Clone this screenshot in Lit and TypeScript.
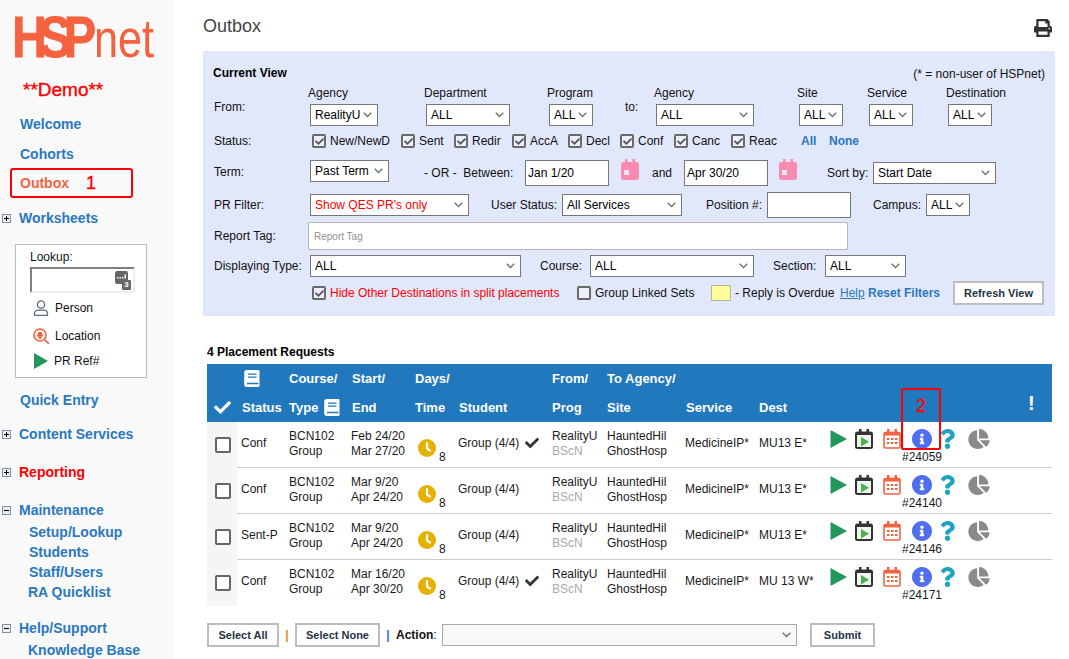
import { LitElement, html, css } from "lit";
import { customElement } from "lit/decorators.js";

const CHECK = "M173.898 439.404l-166.4-166.4c-9.997-9.997-9.997-26.206 0-36.204l36.203-36.204c9.997-9.998 26.207-9.998 36.204 0L192 312.69 432.095 72.596c9.997-9.997 26.207-9.997 36.204 0l36.203 36.204c9.997 9.997 9.997 26.206 0 36.204l-294.4 294.401c-9.998 9.997-26.207 9.997-36.204-.001z";
const INFO = "M256 8C119.043 8 8 119.083 8 256c0 136.997 111.043 248 248 248s248-111.003 248-248C504 119.083 392.957 8 256 8zm0 110c23.196 0 42 18.804 42 42s-18.804 42-42 42-42-18.804-42-42 18.804-42 42-42zm56 254c0 6.627-5.373 12-12 12h-88c-6.627 0-12-5.373-12-12v-24c0-6.627 5.373-12 12-12h12v-64h-12c-6.627 0-12-5.373-12-12v-24c0-6.627 5.373-12 12-12h64c6.627 0 12 5.373 12 12v100h12c6.627 0 12 5.373 12 12v24z";
const QUESTION = "M202.021 0C122.202 0 70.503 32.703 29.914 91.026c-7.363 10.58-5.093 25.086 5.178 32.874l43.138 32.709c10.373 7.865 25.132 6.026 33.253-4.148 25.049-31.381 43.63-49.449 82.757-49.449 30.764 0 68.816 19.799 68.816 49.631 0 22.552-18.617 34.134-48.993 51.164-35.423 19.86-82.299 44.576-82.299 106.405V320c0 13.255 10.745 24 24 24h72.471c13.255 0 24-10.745 24-24v-5.773c0-42.86 125.268-44.645 125.268-160.627C377.504 66.256 286.902 0 202.021 0zM192 373.459c-38.196 0-69.271 31.075-69.271 69.271 0 38.195 31.075 69.27 69.271 69.27s69.271-31.075 69.271-69.271-31.075-69.27-69.271-69.27z";
const PIE = "M527.79 288H290.5l158.03 158.03c6.04 6.04 15.98 6.53 22.19.68 38.7-36.46 65.32-85.61 73.13-140.86 1.34-9.46-6.51-17.85-16.06-17.85zm-15.83-64.8C503.72 103.74 408.26 8.28 288.8.04 279.68-.59 272 7.1 272 16.24V240h223.77c9.14 0 16.82-7.68 16.19-16.8zM224 288V50.71c0-9.55-8.39-17.4-17.84-16.06C86.99 51.49-4.1 155.6.14 280.37 4.5 408.51 114.83 513.59 243.03 511.98c50.4-.63 96.97-16.87 135.26-44.03 7.9-5.6 8.42-17.23 1.57-24.08L224 288z";
const PRINT = "M448 192V77.25c0-8.49-3.37-16.62-9.37-22.63L393.37 9.37c-6-6-14.14-9.37-22.63-9.37H96C78.33 0 64 14.33 64 32v160c-35.35 0-64 28.65-64 64v112c0 8.84 7.16 16 16 16h48v96c0 17.67 14.33 32 32 32h320c17.67 0 32-14.33 32-32v-96h48c8.84 0 16-7.16 16-16V256c0-35.35-28.65-64-64-64zm-64 256H128v-96h256v96zm0-224H128V64h192v48c0 8.84 7.16 16 16 16h48v96zm48 72c-13.25 0-24-10.75-24-24 0-13.26 10.75-24 24-24s24 10.74 24 24c0 13.25-10.75 24-24 24z";

const checkIcon = (cls: string) => html`<svg class=${cls} viewBox="0 0 512 512"><path d=${CHECK}></path></svg>`;
const book = html`<svg class="book" viewBox="0 0 16 17"><path fill="#fff" d="M3 0h11.500a1 1 0 0 1 1 1v15a1 1 0 0 1-1 1H3a2.800 2.800 0 0 1-2.800-2.800V2.800A2.800 2.800 0 0 1 3 0z"></path><path fill="#2278bd" d="M4 3.500h8.500v1.300H4zM4 6.500h8.500v1.300H4zM3 12.800h11.500v1.500H3z"></path></svg>`;
const cal = html`<svg class="cal" viewBox="0 0 18 21"><path fill="#f78bb0" d="M4 0h2.500v3h5V0H14v3h1.500A2.500 2.500 0 0 1 18 5.500v13a2.500 2.500 0 0 1-2.500 2.500h-13A2.500 2.500 0 0 1 0 18.500v-13A2.500 2.500 0 0 1 2.500 3H4z"></path><rect x="3" y="11" width="5" height="5" fill="#fde3ec"></rect></svg>`;
const playIcon = html`<svg class="i-play" viewBox="0 0 17 20"><polygon points="0.500,1 17,10 0.500,19" fill="#21985a"></polygon></svg>`;
const calPlay = html`<svg class="i-cal" viewBox="0 0 18 20"><path fill="#eef5ee" stroke="#333" stroke-width="2" d="M2.500 3.500h13a1.500 1.500 0 0 1 1.500 1.500v12.500a1.500 1.500 0 0 1-1.500 1.500h-13A1.500 1.500 0 0 1 1 17.500V5a1.500 1.500 0 0 1 1.500-1.500z"></path><path fill="#333" d="M1 3h16v3H1zM4 0h2.500v4H4zM11.500 0H14v4h-2.500z"></path><polygon points="6,8 14,12.750 6,17.500" fill="#4caf50"></polygon></svg>`;
const calGrid = html`<svg class="i-cal" viewBox="0 0 18 20"><path fill="none" stroke="#f4623f" stroke-width="1.600" d="M2.500 3.500h13a1.500 1.500 0 0 1 1.500 1.500v12.500a1.500 1.500 0 0 1-1.500 1.500h-13A1.500 1.500 0 0 1 1 17.500V5a1.500 1.500 0 0 1 1.500-1.500z"></path><path fill="#f4623f" d="M1 3h16v3.500H1zM4 0h2.500v4H4zM11.500 0H14v4h-2.500zM4 9h2.500v2H4zM8 9h2.500v2H8zM12 9h2.500v2H12zM4 13h2.500v2H4zM8 13h2.500v2H8zM12 13h2.500v2H12z"></path></svg>`;
const infoIcon = html`<svg class="i-info" viewBox="8 8 496 496"><path fill="#4f6ef0" d=${INFO}></path></svg>`;
const qIcon = html`<svg class="i-q" viewBox="0 0 384 512"><path fill="#1ea5bd" d=${QUESTION}></path></svg>`;
const pieIcon = html`<svg class="i-pie" viewBox="0 0 544 512"><path fill="#8a8a8a" d=${PIE}></path></svg>`;
const clock = html`<svg class="clock" viewBox="0 0 18 18"><circle cx="9" cy="9" r="9" fill="#e5b000"></circle><path d="M9 4v5.500l3 2.200" fill="none" stroke="#fff" stroke-width="2.200" stroke-linecap="round" stroke-linejoin="round"></path></svg>`;

@customElement("app-root")
export class AppRoot extends LitElement {
  static styles = css`
    :host { display: flex; width: 1069px; height: 659px; overflow: hidden; background: #fff; color: #111; font: 12px/14px "Liberation Sans", Arial, sans-serif; }
    * { box-sizing: border-box; }
    svg { display: block; }

    .side { width: 173px; height: 659px; flex: none; background: #f9f9f9; }
    .logo { width: 173px; height: 76px; }
    .demo { height: 24px; line-height: 24px; margin-top: 2px; padding-left: 23px; font-size: 19px; color: #f00; -webkit-text-stroke: .35px #f00; }
    .nav { display: flex; align-items: center; height: 20px; padding-left: 20px; font-size: 14px; font-weight: bold; color: #2a78bd; white-space: nowrap; }
    .nav.tree { padding-left: 2px; }
    .nav.sub { padding-left: 29px; }
    .nav.sub2 { padding-left: 28px; }
    .nav.red { color: #f00; }
    .tbox { width: 9px; height: 9px; margin-right: 8px; border: 1px solid #7f93a8; background: #e8edf2; position: relative; flex: none; }
    .tbox::before { content: ""; position: absolute; left: 1px; top: 3px; width: 5px; height: 1px; background: #000; }
    .tbox.plus::after { content: ""; position: absolute; left: 3px; top: 1px; width: 1px; height: 5px; background: #000; }
    .mt2 { margin-top: 2px; } .mt10 { margin-top: 10px; } .mt12 { margin-top: 12px; }
    .mt14 { margin-top: 14px; } .mt16 { margin-top: 16px; } .mt18 { margin-top: 18px; }
    .outbox { display: flex; align-items: center; width: 123px; height: 30px; margin: 4px 0 0 10px; padding-left: 8px; border: 2px solid #f00; border-radius: 3px; font-size: 14px; font-weight: bold; color: #f4623f; }
    .outbox b { margin-left: 17px; font-size: 18px; font-weight: normal; color: #f00; -webkit-text-stroke: .35px #f00; }

    .lookup { width: 132px; height: 134px; margin: 16px 0 0 15px; padding: 5px 0 0 14px; background: #fff; border: 1px solid #bdbdbd; color: #111; }
    .lk-title { height: 14px; }
    .lk-input { display: flex; justify-content: flex-end; align-items: center; width: 105px; height: 26px; margin-top: 3px; padding-right: 2px; border: 2px solid; border-color: #808080 #eee #eee #808080; }
    .lk-chip { position: relative; width: 16px; height: 19px; }
    .lk-chip svg { position: absolute; left: 0; top: 0; width: 13px; height: 13px; }
    .lk-chip span { position: absolute; right: 0; bottom: 0; width: 9px; height: 10px; border-radius: 1px; background: #666; color: #fff; font: bold 8px/10px "Liberation Sans", sans-serif; text-align: center; }
    .lk-row { display: flex; align-items: center; height: 28px; }
    .lk-row svg { width: 16px; height: 16px; margin: 0 6px 0 3px; flex: none; }
    .lk-row.first { margin-top: 1px; }
    .lk-row.last { height: 22px; }
    .lk-row.last svg { margin: 0 5px 0 3px; }

    .main { flex: 1; min-width: 0; padding-left: 30px; }
    .top { display: flex; justify-content: space-between; height: 51px; padding: 15px 17px 0 0; }
    .top h1 { margin: 0; font-size: 18px; line-height: 22px; font-weight: normal; color: #444; }
    .print { width: 18px; height: 18px; margin-top: 4px; fill: #333; }

    .panel { width: 852px; height: 265px; padding: 14px 10px 0 11px; background: #e2e8fb; }
    .p-title { display: flex; justify-content: space-between; height: 16px; line-height: 16px; }
    .p-title b { color: #000; margin-left: -1px; }
    .p-title span { padding-top: 1px; }
    .r { display: grid; align-items: center; white-space: nowrap; }
    .r1 { height: 44px; margin-top: 2px; grid-template-columns: 94px 116px 123px 78px 29px 143px 70px 79px 1fr; }
    .r2 { height: 28px; grid-template-columns: 98px 89px 53px 58px 56px 52px 54px 57px 70px 28px 1fr; }
    .r3 { height: 28px; margin-top: 4px; grid-template-columns: 96px 114px 101px 96px 31px 32px 95px 48px 46px 1fr; }
    .r4 { height: 30px; margin-top: 3px; grid-template-columns: 96px 181px 71px 144px 61px 106px 53px 1fr; }
    .r5 { height: 32px; grid-template-columns: 94px 1fr; }
    .r6 { height: 28px; grid-template-columns: 96px 230px 50px 183px 52px 1fr; }
    .r7 { height: 26px; grid-template-columns: 98px 265px 134px 24px 105px 28px 85px 1fr; }
    .field { display: flex; flex-direction: column; align-items: flex-start; align-self: start; gap: 4px; padding-top: 3px; }
    .field select { margin-left: 2px; }
    .dn { margin-top: 3px; }
    .up { margin-top: -3px; }
    .termsel { margin-top: -4px; }

    select { appearance: none; -webkit-appearance: none; display: block; height: 22px; padding: 0 0 0 4px; border: 1px solid #767676; border-radius: 0; color: #000; font: 12px "Liberation Sans", Arial, sans-serif;
      background: #fff url("data:image/svg+xml,%3Csvg xmlns='http://www.w3.org/2000/svg' width='9' height='6'%3E%3Cpath d='M.7.7 4.500 4.500 8.300.7' fill='none' stroke='%23707070' stroke-width='1.300'/%3E%3C/svg%3E") no-repeat right 5px center; }
    .w44 { width: 44px; } .w68 { width: 68px; } .w79 { width: 79px; } .w81 { width: 81px; } .w84 { width: 84px; } .w98 { width: 98px; }
    .w120 { width: 120px; } .w123 { width: 123px; } .w159 { width: 159px; } .w164 { width: 164px; } .w211 { width: 211px; }
    .redtxt { color: #f00; }
    input.txt { display: block; width: 84px; height: 26px; padding: 0 2px; border: 1px solid #767676; background: #fff; color: #000; font: 12px "Liberation Sans", Arial, sans-serif; }
    input.tag { display: block; width: 540px; height: 28px; padding: 0 5px; border: 1px solid #b5b5b5; border-radius: 1px; background: #fff; font: 10px "Liberation Sans", Arial, sans-serif; }
    input.tag::placeholder { color: #8f8f8f; opacity: 1; }
    .cal { width: 18px; height: 21px; margin-top: -7px; }

    .chk { display: flex; align-items: center; gap: 4px; }
    .cb { display: flex; align-items: center; justify-content: center; width: 14px; height: 14px; flex: none; border: 2px solid #6a6a6a; border-radius: 2px; background: #edf0fa; }
    .cb svg { width: 9px; height: 9px; fill: #555; }
    .link { color: #2a78bd; font-weight: bold; }
    .help { color: #2a78bd; text-decoration: underline; }
    .swatch { width: 20px; height: 16px; background: #ffff99; border: 1px solid #b5b5a0; }
    .btn { display: flex; align-items: center; justify-content: center; height: 24px; padding: 0; border: 2px solid #bdbdbd; background: #fff; color: #243444; font: bold 11px "Liberation Sans", Arial, sans-serif; }
    .refresh { width: 91px; }

    .count { height: 16px; margin-top: 28px; padding-left: 4px; line-height: 16px; font-weight: bold; color: #000; }
    .table { position: relative; width: 845px; margin: 4px 0 0 4px; }
    .thead, .row { display: grid; grid-template-columns: 30px 48px 62px 64px 43px 94px 55px 78px 74px 70px 1fr; }
    .thead { grid-auto-rows: 29px; height: 58px; align-items: center; background: #2278bd; color: #fff; font-size: 13px; font-weight: bold; }
    .thead > div { padding-left: 4px; white-space: nowrap; }
    .thead > .p5 { padding-left: 5px; }
    .thead .book { width: 16px; height: 17px; }
    .thead > .bookcell { padding-left: 7px; }
    .typecell { display: flex; align-items: center; gap: 6px; }
    .tick { width: 17px; height: 17px; margin-left: 3px; fill: #fff; }
    .thead > .excl { padding: 0 0 9px 203px; font-size: 20px; line-height: 20px; }
    .row { height: 46px; }
    .row .cell { display: flex; flex-direction: column; justify-content: center; padding: 0 0 1px 4px; line-height: 15px; border-bottom: 1px solid #ccc; white-space: nowrap; color: #1a1a1a; }
    .row .one { padding-bottom: 3px; }
    .row.last .cell { border-bottom-color: transparent; }
    .row .boxcell { align-items: center; padding: 0 0 0 2px; background: #f5f5f5; border-bottom: 0; }
    .big { width: 16px; height: 16px; border: 2px solid #666; border-radius: 2px; background: #fff; }
    .muted { color: #aaa; }
    .row .timecell { flex-direction: row; align-items: flex-end; justify-content: flex-start; padding: 0 0 10px 7px; }
    .clock { width: 18px; height: 18px; }
    .timecell span { margin: 0 0 -7px 3px; line-height: 14px; }
    .row .student { flex-direction: row; align-items: center; justify-content: flex-start; gap: 6px; }
    .smallcheck { width: 14px; height: 14px; fill: #333; }
    .row .act { display: block; padding: 7px 0 0 5px; }
    .icons { display: flex; align-items: center; height: 20px; }
    .i-play { width: 17px; height: 20px; }
    .i-cal { width: 18px; height: 20px; margin-left: 8px; }
    .i-cal + .i-cal { margin-left: 10px; }
    .i-info { width: 20px; height: 20px; margin-left: 11px; }
    .i-q { width: 15px; height: 20px; margin-left: 8px; }
    .i-pie { width: 22px; height: 20px; margin-left: 13px; }
    .num { margin: 1px 0 0 72px; line-height: 14px; }
    .anno { position: absolute; left: 694px; top: 24px; width: 40px; height: 62px; border: 2px solid #f00; border-radius: 2px; color: #f00; font-size: 18px; line-height: 32px; text-align: center; -webkit-text-stroke: .35px #f00; }

    .foot { display: flex; align-items: center; height: 24px; margin: 17px 0 0 4px; white-space: nowrap; }
    .all { width: 72px; }
    .none { width: 85px; }
    .sep { width: 16px; text-align: center; font-weight: bold; }
    .sep.o { color: #d88a1a; } .sep.b { color: #2a78bd; }
    .action { width: 41px; flex: none; font-weight: bold; }
    .action i { font-style: normal; font-weight: normal; }
    .actsel { width: 355px; margin: 0 13px 0 5px; border-color: #aaa; background-color: #f8f8f8; }
    .submit { width: 65px; }
  `;

  private sel(cls: string, text: string) {
    return html`<select class=${cls}><option>${text}</option></select>`;
  }
  private chk(label: string, on = true, cls = "") {
    return html`<label class="chk ${cls}"><span class="cb">${on ? checkIcon("") : ""}</span>${label}</label>`;
  }

  private sidebar() {
    const tree = (label: string, open: boolean, mt: string, cls = "") =>
      html`<div class="nav tree ${mt} ${cls}"><span class="tbox ${open ? "" : "plus"}"></span>${label}</div>`;
    return html`<aside class="side">
      <svg class="logo" viewBox="0 0 173 76">
        <g transform="scale(.85 1)">
          <text x="14 46 75" y="57" font-family="Liberation Sans" font-weight="bold" font-size="57" fill="#f4623f" stroke="#f4623f" stroke-width=".8">HSP</text>
        </g>
        <text x="94" y="57" font-family="Liberation Sans" font-size="54" fill="#f4623f" textLength="60" lengthAdjust="spacingAndGlyphs">net</text>
      </svg>
      <div class="demo">**Demo**</div>
      <div class="nav mt12">Welcome</div>
      <div class="nav mt10">Cohorts</div>
      <div class="outbox">Outbox<b>1</b></div>
      ${tree("Worksheets", false, "mt10")}
      <div class="lookup">
        <div class="lk-title">Lookup:</div>
        <div class="lk-input"><div class="lk-chip">
          <svg viewBox="0 0 13 13"><rect width="13" height="13" rx="2" fill="#666"></rect><path fill="#fff" d="M2 6h1.500v1.500H2zM4.500 6H6v1.500H4.500zM7 6h1.500v1.500H7zM9.500 3.500H11v4H9.500z"></path></svg>
          <span>3</span>
        </div></div>
        <div class="lk-row first">
          <svg viewBox="0 0 16 16" fill="none" stroke="#5d6b7a" stroke-width="1.300"><circle cx="8" cy="4.500" r="3.600"></circle><path d="M1.500 15.300v-1.800c0-2 2-3.300 3.500-3.300h6c1.500 0 3.500 1.300 3.500 3.300v1.800z"></path></svg>
          Person
        </div>
        <div class="lk-row">
          <svg viewBox="0 0 16 16" fill="none" stroke="#f4623f" stroke-width="1.600"><circle cx="7" cy="7" r="6"></circle><circle cx="7" cy="6" r="1.500" fill="#f4623f"></circle><path d="M7 10.500 4.800 7.200M7 10.500l2.200-3.300M11.500 11.500l4 4" stroke-linecap="round"></path></svg>
          Location
        </div>
        <div class="lk-row last">
          <svg viewBox="0 0 16 16"><polygon points="1,0 15,8 1,16" fill="#21985a"></polygon></svg>
          PR Ref#
        </div>
      </div>
      <div class="nav mt12">Quick Entry</div>
      ${tree("Content Services", false, "mt14")}
      ${tree("Reporting", false, "mt18", "red")}
      ${tree("Maintenance", true, "mt18")}
      <div class="nav sub mt2">Setup/Lookup</div>
      <div class="nav sub">Students</div>
      <div class="nav sub">Staff/Users</div>
      <div class="nav sub2">RA Quicklist</div>
      ${tree("Help/Support", true, "mt16")}
      <div class="nav sub2 mt2">Knowledge Base</div>
    </aside>`;
  }

  private panel() {
    const field = (label: string, cls: string, v: string) =>
      html`<div class="field">${label}${this.sel(cls, v)}</div>`;
    return html`<section class="panel">
      <div class="p-title"><b>Current View</b><span>(* = non-user of HSPnet)</span></div>
      <div class="r r1">
        <div class="dn">From:</div>
        ${field("Agency", "w68", "RealityU")}
        ${field("Department", "w84", "ALL")}
        ${field("Program", "w44", "ALL")}
        <div class="dn">to:</div>
        ${field("Agency", "w98", "ALL")}
        ${field("Site", "w44", "ALL")}
        ${field("Service", "w44", "ALL")}
        ${field("Destination", "w44", "ALL")}
      </div>
      <div class="r r2">
        <div>Status:</div>
        ${["New/NewD", "Sent", "Redir", "AccA", "Decl", "Conf", "Canc", "Reac"].map((s) => this.chk(s))}
        <div class="link">All</div><div class="link">None</div>
      </div>
      <div class="r r3">
        <div class="up">Term:</div>
        ${this.sel("w79 termsel", "Past Term")}
        <div>- OR -&nbsp; Between:</div>
        <input class="txt" value="Jan 1/20" />
        ${cal}
        <div>and</div>
        <input class="txt" value="Apr 30/20" />
        ${cal}
        <div>Sort by:</div>
        ${this.sel("w123", "Start Date")}
      </div>
      <div class="r r4">
        <div>PR Filter:</div>
        ${this.sel("w159 redtxt", "Show QES PR's only")}
        <div>User Status:</div>
        ${this.sel("w120", "All Services")}
        <div>Position #:</div>
        <input class="txt" />
        <div>Campus:</div>
        ${this.sel("w44", "ALL")}
      </div>
      <div class="r r5">
        <div>Report Tag:</div>
        <input class="tag" placeholder="Report Tag" />
      </div>
      <div class="r r6">
        <div>Displaying Type:</div>
        ${this.sel("w211", "ALL")}
        <div>Course:</div>
        ${this.sel("w164", "ALL")}
        <div>Section:</div>
        ${this.sel("w81", "ALL")}
      </div>
      <div class="r r7">
        <div></div>
        ${this.chk("Hide Other Destinations in split placements", true, "redtxt")}
        ${this.chk("Group Linked Sets", false)}
        <div class="swatch"></div>
        <div>- Reply is Overdue</div>
        <div class="help">Help</div>
        <div class="link">Reset Filters</div>
        <button class="btn refresh">Refresh View</button>
      </div>
    </section>`;
  }

  private table() {
    const rows = [
      ["Conf", "Feb 24/20", "Mar 27/20", true, "MU13 E*", "#24059"],
      ["Conf", "Mar 9/20", "Apr 24/20", false, "MU13 E*", "#24140"],
      ["Sent-P", "Mar 9/20", "Apr 24/20", false, "MU13 E*", "#24146"],
      ["Conf", "Mar 16/20", "Apr 30/20", true, "MU 13 W*", "#24171"],
    ] as const;
    return html`<div class="table">
      <div class="thead">
        <div></div><div class="bookcell">${book}</div><div>Course/</div><div class="p5">Start/</div><div>Days/</div><div></div><div>From/</div><div>To Agency/</div><div></div><div></div><div></div>
        <div>${checkIcon("tick")}</div><div class="p5">Status</div><div class="typecell">Type ${book}</div><div class="p5">End</div><div>Time</div><div class="p5">Student</div><div>Prog</div><div>Site</div><div class="p5">Service</div><div>Dest</div><div class="excl">!</div>
      </div>
      ${rows.map((r, i) => html`<div class="row ${i === rows.length - 1 ? "last" : ""}">
        <div class="cell boxcell"><span class="big"></span></div>
        <div class="cell one">${r[0]}</div>
        <div class="cell"><div>BCN102</div><div>Group</div></div>
        <div class="cell"><div>${r[1]}</div><div>${r[2]}</div></div>
        <div class="cell timecell">${clock}<span>8</span></div>
        <div class="cell student one">Group (4/4)${r[3] ? checkIcon("smallcheck") : ""}</div>
        <div class="cell"><div>RealityU</div><div class="muted">BScN</div></div>
        <div class="cell"><div>HauntedHil</div><div>GhostHosp</div></div>
        <div class="cell one">MedicineIP*</div>
        <div class="cell one">${r[4]}</div>
        <div class="cell act">
          <div class="icons">${playIcon}${calPlay}${calGrid}${infoIcon}${qIcon}${pieIcon}</div>
          <div class="num">${r[5]}</div>
        </div>
      </div>`)}
      <div class="anno">2</div>
    </div>`;
  }

  render() {
    return html`${this.sidebar()}
      <main class="main">
        <header class="top">
          <h1>Outbox</h1>
          <svg class="print" viewBox="0 0 512 512"><path d=${PRINT}></path></svg>
        </header>
        ${this.panel()}
        <div class="count">4 Placement Requests</div>
        ${this.table()}
        <div class="foot">
          <button class="btn all">Select All</button>
          <span class="sep o">|</span>
          <button class="btn none">Select None</button>
          <span class="sep b">|</span>
          <span class="action">Action<i>:</i></span>
          ${this.sel("actsel", "")}
          <button class="btn submit">Submit</button>
        </div>
      </main>`;
  }
}
